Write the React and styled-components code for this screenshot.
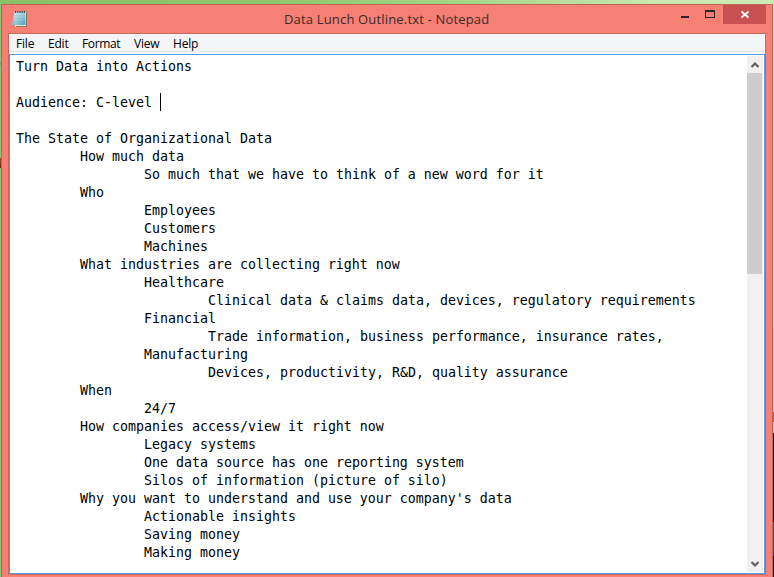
import React from "react";
import styled, { createGlobalStyle } from "styled-components";

const GlobalStyle = createGlobalStyle`
  * { box-sizing: border-box; }
  html, body { margin: 0; overflow: hidden; }
`;

const Desktop = styled.div`
  width: 774px;
  height: 577px;
  padding: 4px 1px 0 1px;
  overflow: hidden;
  background:
    linear-gradient(#a9522f, #6a2b10) 0 158px / 1px 10px no-repeat,
    linear-gradient(#8a9a78, #8a9a78) 0 62px / 1px 3px no-repeat,
    linear-gradient(#c4e3a6 0 328px, #c9c4c4 328px 412px, #a06a3c 412px 422px, #c9c4c4 422px 433px, #2a0d0c 433px 522px, #1c5a78 522px 556px, #2a0d0c 556px) 773px 0 / 1px 577px no-repeat,
    linear-gradient(90deg, #89c168 0, #8fc86c 35%, #a5d586 60%, #c9e8ae 85%, #cdeab4 100%) 0 0 / 774px 4px no-repeat,
    #8fc277;
`;

const Window = styled.div`
  display: flex;
  flex-direction: column;
  width: 772px;
  height: 577px;
  padding: 0 7px 6px 6px;
  border: 1px solid #bf665b;
  background: #f58073;
  font-family: "Open Sans", "Noto Sans", sans-serif;
`;

const TitleBar = styled.header`
  display: grid;
  grid-template-columns: 274px 1fr 100px;
  flex: 0 0 28px;
  height: 28px;
`;

const AppIcon = styled.svg`
  display: block;
  width: 18px;
  height: 18px;
  margin: 5px 0 0 3px;
`;

const Title = styled.h1`
  margin: 0;
  padding-left: 2px;
  color: #402a2c;
  font-size: 13px;
  font-weight: 400;
  line-height: 29px;
  letter-spacing: 0.17px;
  white-space: nowrap;
`;

const Controls = styled.div`
  display: flex;
  justify-content: flex-end;
  align-items: flex-start;
  margin-right: -1px;
`;

const ControlButton = styled.button`
  display: block;
  width: ${(p) => p.$width}px;
  height: 19px;
  padding: 0;
  border: 0;
  background: ${(p) => (p.$danger ? "#c75050" : "transparent")};
  svg { display: block; }
`;

const Client = styled.main`
  display: flex;
  flex-direction: column;
  flex: 0 0 542px;
  width: 758px;
  border: 1px solid #c9665f;
`;

const MenuBar = styled.nav`
  display: flex;
  flex: 0 0 20px;
  height: 20px;
  background: #f4f5f7;
  border-bottom: 2px solid #f8f9fb;
  box-shadow: inset 0 -1px #e6e7ea;
`;

const MenuItem = styled.span`
  flex: 0 0 ${(p) => p.$width}px;
  padding-left: 7px;
  color: #000;
  font-size: 12px;
  line-height: 20px;
  letter-spacing: ${(p) => p.$tracking || "-0.2px"};
  white-space: nowrap;
`;

const Editor = styled.section`
  display: flex;
  flex: 1;
  min-height: 0;
  border: 1px solid #569de5;
  background: #fff;
`;

const Document = styled.div`
  flex: 1;
  padding: 3px 0 0 6px;
  color: #000;
  font-family: "DejaVu Sans Mono", "Liberation Mono", monospace;
  font-size: 13.29px;
  line-height: 18px;
  white-space: pre;
`;

const Line = styled.div`
  display: flex;
  align-items: center;
  height: 18px;
  padding-left: ${(p) => p.$level * 64}px;
`;

const Caret = styled.i`
  width: 1px;
  height: 18px;
  margin-top: -2px;
  background: #000;
`;

const ScrollBar = styled.aside`
  display: flex;
  flex-direction: column;
  flex: 0 0 16px;
  margin: 1px 1px 1px 0;
  background: #f0f0f0;
`;

const Arrow = styled.svg`
  display: block;
  flex: 0 0 17px;
  width: 16px;
  height: 17px;
`;

const Thumb = styled.div`
  width: 15px;
  height: 201px;
  background: #cdcdcd;
`;

const Track = styled.div`
  flex: 1;
`;

const menu = [
  ["File", 32],
  ["Edit", 34],
  ["Format", 52, "-0.35px"],
  ["View", 39],
  ["Help", 40],
];

const lines = [
  [0, "Turn Data into Actions"],
  [0, ""],
  [0, "Audience: C-level ", true],
  [0, ""],
  [0, "The State of Organizational Data"],
  [1, "How much data"],
  [2, "So much that we have to think of a new word for it"],
  [1, "Who"],
  [2, "Employees"],
  [2, "Customers"],
  [2, "Machines"],
  [1, "What industries are collecting right now"],
  [2, "Healthcare"],
  [3, "Clinical data & claims data, devices, regulatory requirements"],
  [2, "Financial"],
  [3, "Trade information, business performance, insurance rates,"],
  [2, "Manufacturing"],
  [3, "Devices, productivity, R&D, quality assurance"],
  [1, "When"],
  [2, "24/7"],
  [1, "How companies access/view it right now"],
  [2, "Legacy systems"],
  [2, "One data source has one reporting system"],
  [2, "Silos of information (picture of silo)"],
  [1, "Why you want to understand and use your company's data"],
  [2, "Actionable insights"],
  [2, "Saving money"],
  [2, "Making money"],
];

function NotepadIcon() {
  return (
    <AppIcon viewBox="0 0 18 18">
      <defs>
        <linearGradient id="page" x1="0" y1="0" x2="1" y2="1">
          <stop offset="0" stopColor="#d5edf3" />
          <stop offset="0.5" stopColor="#9fd0df" />
          <stop offset="1" stopColor="#4b9fba" />
        </linearGradient>
      </defs>
      <path d="M4 2H16V16L14 17H4Z" fill="#e9eadb" />
      <path d="M15.5 3V16.5H5" fill="none" stroke="#82755f" />
      <path d="M3.5 2H14.5V15H1L2.6 7Z" fill="url(#page)" />
      <path d="M3.5 5.5H14M3 8.5H14M2.5 11.5H14" stroke="#74b4c9" strokeWidth="0.6" opacity="0.6" />
      <path d="M1 15L3.2 7V15Z" fill="#8fb9c7" />
      <path d="M4 2H15.5" stroke="#44535a" strokeWidth="2" strokeDasharray="1.2 1" />
    </AppIcon>
  );
}

export default function App() {
  return (
    <>
      <GlobalStyle />
      <Desktop>
        <Window>
          <TitleBar>
            <NotepadIcon />
            <Title>Data Lunch Outline.txt - Notepad</Title>
            <Controls>
              <ControlButton $width={26} aria-label="Minimize">
                <svg width="26" height="19"><path d="M4 11H12V13H4Z" fill="#2b2325" /></svg>
              </ControlButton>
              <ControlButton $width={20} aria-label="Maximize">
                <svg width="20" height="19"><path d="M2 5H12V13H2ZM3 7V12H11V7Z" fill="#2b2325" fillRule="evenodd" /></svg>
              </ControlButton>
              <ControlButton $width={43} $danger aria-label="Close">
                <svg width="43" height="19"><path d="M18.5 6.5L25.5 12.5M25.5 6.5L18.5 12.5" stroke="#fff" strokeWidth="1.8" /></svg>
              </ControlButton>
            </Controls>
          </TitleBar>
          <Client>
            <MenuBar>
              {menu.map(([label, width, tracking]) => (
                <MenuItem key={label} $width={width} $tracking={tracking}>{label}</MenuItem>
              ))}
            </MenuBar>
            <Editor>
              <Document>
                {lines.map(([level, text, caret], i) => (
                  <Line key={i} $level={level}>
                    {text}
                    {caret && <Caret />}
                  </Line>
                ))}
              </Document>
              <ScrollBar>
                <Arrow viewBox="0 0 16 17"><path d="M4.5 11L8 7.5L11.5 11" fill="none" stroke="#606060" strokeWidth="2.2" /></Arrow>
                <Thumb />
                <Track />
                <Arrow viewBox="0 0 16 17"><path d="M4.5 7L8 10.5L11.5 7" fill="none" stroke="#606060" strokeWidth="2.2" /></Arrow>
              </ScrollBar>
            </Editor>
          </Client>
        </Window>
      </Desktop>
    </>
  );
}
